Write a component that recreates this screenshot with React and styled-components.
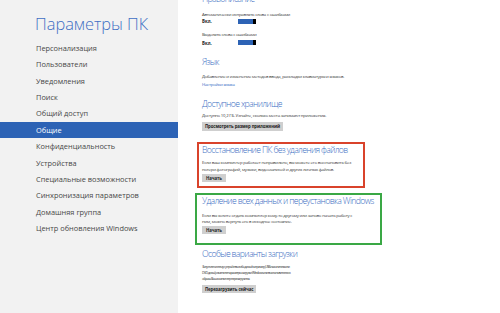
import React from "react";
import styled, { createGlobalStyle } from "styled-components";

const Global = createGlobalStyle`
  html, body { margin: 0; padding: 0; }
  body { font-family: "Open Sans", "Noto Sans", sans-serif; background: #fff; }
  * { box-sizing: border-box; }
`;

const Page = styled.div`
  width: 500px;
  height: 313px;
  display: flex;
  overflow: hidden;
`;

const Sidebar = styled.aside`
  width: 178px;
  flex: none;
  background: #f2f2f2;
  padding-top: 14px;
`;

const Title = styled.h1`
  margin: 0 0 5.8px 35px;
  font-size: 16.4px;
  line-height: 20px;
  font-weight: 300;
  color: #3f6fc4;
`;

const NavItem = styled.div`
  height: 16.4px;
  line-height: 16.4px;
  padding-left: 36px;
  font-size: 7.4px;
  color: ${(p) => (p.$active ? "#fff" : "#484848")};
  background: ${(p) => (p.$active ? "#2d63b5" : "transparent")};
  white-space: nowrap;
`;

const Main = styled.main`
  flex: 1;
  background: #fff;
  padding-left: 24px;
  overflow: hidden;
`;

const Heading = styled.h2`
  margin: ${(p) => p.$mt || 0}px 0 0 0;
  font-size: 8.7px;
  letter-spacing: -0.65px;
  line-height: 13px;
  font-weight: 300;
  color: #3d6fc3;
  white-space: nowrap;
`;

const Text = styled.p`
  margin: ${(p) => p.$mt || 0}px 0 0 0;
  font-size: ${(p) => p.$size || 4.3}px;
  letter-spacing: ${(p) => p.$ls ?? -0.22}px;
  line-height: 6.4px;
  color: #333;
  white-space: nowrap;
`;

const Link = styled(Text)`
  color: #2a63c2;
`;

const ToggleRow = styled.div`
  margin-top: ${(p) => p.$mt || 0}px;
  display: flex;
  align-items: center;
  height: 7px;
`;

const ToggleLabel = styled.span`
  width: 36px;
  font-size: 4.4px;
  font-weight: 700;
  color: #222;
`;

const Toggle = styled.span`
  display: flex;
  width: 18px;
  height: 5px;
  background: #2d63b5;
  justify-content: flex-end;
`;

const Thumb = styled.span`
  width: 3px;
  height: 5px;
  background: #000;
`;

const Button = styled.div`
  margin-top: ${(p) => p.$mt || 0}px;
  display: flex;
  width: fit-content;
  align-items: center;
  justify-content: center;
  height: 8.5px;
  padding: 0 ${(p) => p.$px || 3}px;
  background: #cfcfcf;
  font-size: 4.3px;
  letter-spacing: -0.1px;
  line-height: 8.5px;
  font-weight: 700;
  color: #222;
  white-space: nowrap;
`;

const Frame = styled.section`
  margin-top: ${(p) => p.$mt || 0}px;
  margin-left: ${(p) => p.$ml}px;
  width: ${(p) => p.$w}px;
  border: 2px solid ${(p) => p.$color};
  padding: 0 0 ${(p) => p.$pb}px ${(p) => -p.$ml - 2}px;
`;

const navItems = [
  "Персонализация",
  "Пользователи",
  "Уведомления",
  "Поиск",
  "Общий доступ",
  "Общие",
  "Конфиденциальность",
  "Устройства",
  "Специальные возможности",
  "Синхронизация параметров",
  "Домашняя группа",
  "Центр обновления Windows",
];

export default function App() {
  return (
    <>
      <Global />
      <Page>
        <Sidebar>
          <Title>Параметры ПК</Title>
          {navItems.map((n) => (
            <NavItem key={n} $active={n === "Общие"}>
              {n}
            </NavItem>
          ))}
        </Sidebar>
        <Main>
          <Heading $mt={-7}>Правописание</Heading>
          <Text $mt={4.8}>Автоматически исправлять слова с ошибками</Text>
          <ToggleRow $mt={0.3}>
            <ToggleLabel>Вкл.</ToggleLabel>
            <Toggle>
              <Thumb />
            </Toggle>
          </ToggleRow>
          <Text $mt={6.8}>Выделять слова с ошибками</Text>
          <ToggleRow $mt={1.3}>
            <ToggleLabel>Вкл.</ToggleLabel>
            <Toggle>
              <Thumb />
            </Toggle>
          </ToggleRow>
          <Heading $mt={9.5}>Язык</Heading>
          <Text $mt={4.3}>
            Добавление и изменение методов ввода, раскладки клавиатуры и языков.
          </Text>
          <Link $mt={1.6}>Настройки языка</Link>
          <Heading $mt={10.3}>Доступное хранилище</Heading>
          <Text $mt={1.3}>
            Доступно 10,2 ГБ. Узнайте, сколько места занимают приложения.
          </Text>
          <Button $mt={3.8}>Просмотреть размер приложений</Button>
          <Frame $mt={11.5} $ml={-5} $w={168} $color="#d9432b" $pb={4}>
            <Heading $mt={-0.5}>Восстановление ПК без удаления файлов</Heading>
            <Text $mt={2.8}>
              Если ваш компьютер работает неправильно, вы можете его восстановить без
              <br />
              потери фотографий, музыки, видеозаписей и других личных файлов.
            </Text>
            <Button $mt={1.4} $px={4}>Начать</Button>
          </Frame>
          <Frame $mt={5} $ml={-7} $w={187} $color="#3aa845" $pb={8.5}>
            <Heading $mt={-0.5}>Удаление всех данных и переустановка Windows</Heading>
            <Text $mt={4}>
              Если вы хотите отдать компьютер кому-то другому или заново начать работу с
              <br />
              ним, можно вернуть его в исходное состояние.
            </Text>
            <Button $mt={1.4} $px={4}>Начать</Button>
          </Frame>
          <Heading $mt={3.5}>Особые варианты загрузки</Heading>
          <Text $mt={2.3} $size={3.5} $ls={-0.6}>
            Запустите систему с устройства либо диска (например, USB-накопителя или
            <br />
            DVD-диска), измените параметры загрузки Windows или восстановите ее из
            <br />
            образа. Ваш компьютер перезагрузится.
          </Text>
          <Button $mt={2}>Перезагрузить сейчас</Button>
        </Main>
      </Page>
    </>
  );
}
